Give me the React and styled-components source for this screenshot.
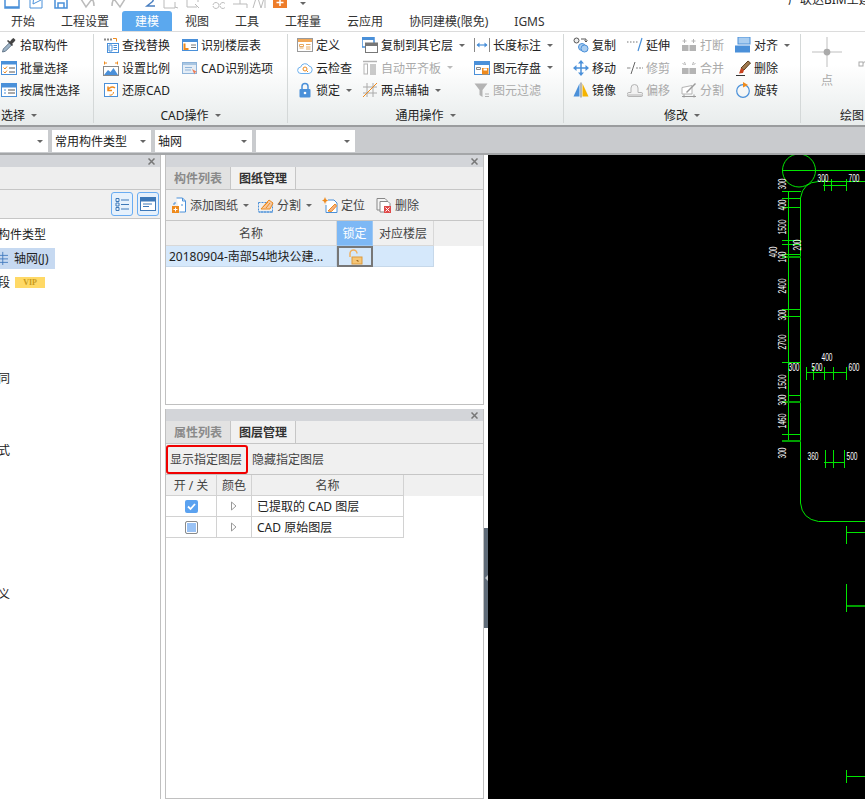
import React from "react";
import styled, { createGlobalStyle } from "styled-components";

const GlobalStyle = createGlobalStyle`
  html, body { margin: 0; padding: 0; background: #fff; }
  body { font-family: "Noto Sans", "Noto Sans CJK SC", sans-serif; font-size: 12px; color: #222; }
`;

const Page = styled.div`
  width: 865px;
  height: 799px;
  overflow: hidden;
  display: flex;
  flex-direction: column;
`;

const QuickBar = styled.div`
  height: 10px;
  flex: none;
  overflow: hidden;
  display: flex;
  align-items: flex-end;
  white-space: nowrap;
  padding-left: 4px;
`;
const QuickIcon = styled.svg`
  width: 16px;
  height: 16px;
  flex: none;
  margin-right: ${(p) => p.$gap}px;
`;
const QuickCaret = styled.span`
  flex: none;
  width: 0;
  height: 0;
  margin: 0 0 5px 12px;
  border-left: 3px solid transparent;
  border-right: 3px solid transparent;
  border-top: 3px solid #666;
`;
const AppTitle = styled.span`
  margin-left: auto;
  margin-bottom: 2px;
  line-height: 16px;
  flex: none;
  width: 77px;
  overflow: hidden;
`;

const TabRow = styled.div`
  height: 21px;
  flex: none;
  display: flex;
  align-items: stretch;
  margin-left: -2px;
`;
const MenuTab = styled.div`
  padding: 0 13px;
  line-height: 21px;
  margin-top: 1px;
  height: 20px;
  white-space: nowrap;
  color: ${(p) => (p.$active ? "#fff" : "#333")};
  background: ${(p) => (p.$active ? "#5ba8ee" : "transparent")};
  border-radius: 3px 3px 0 0;
`;

const Ribbon = styled.div`
  height: 96px;
  flex: none;
  box-sizing: border-box;
  display: flex;
  border-top: 1px solid #dcdcdc;
  border-bottom: 2px solid #9a9c9e;
  background: linear-gradient(#fff 0%, #fff 35%, #e8ecec 100%);
  overflow: hidden;
`;
const RibbonGroup = styled.div`
  width: ${(p) => p.$w}px;
  flex: none;
  box-sizing: border-box;
  padding-left: ${(p) => p.$pad}px;
  padding-top: 2px;
  display: flex;
  flex-direction: column;
`;
const GroupColumns = styled.div`
  display: flex;
  height: 68px;
  flex: none;
`;
const GroupColumn = styled.div`
  width: ${(p) => p.$w}px;
  flex: none;
  display: grid;
  grid-auto-rows: 22.5px;
`;
const RibbonItem = styled.div`
  display: flex;
  align-items: center;
  gap: 3px;
  white-space: nowrap;
  color: ${(p) => (p.$off ? "#aaa" : "#222")};
`;
const GroupLabel = styled.div`
  height: 20px;
  margin-top: 3px;
  margin-left: ${(p) => (p.$left ? 0 : -p.$pad)}px;
  display: flex;
  align-items: center;
  white-space: nowrap;
  justify-content: ${(p) => (p.$left ? "flex-start" : "center")};
  color: #222;
`;
const Caret = styled.span`
  flex: none;
  width: 0;
  height: 0;
  margin-left: ${(p) => p.$gap}px;
  border-left: 3px solid transparent;
  border-right: 3px solid transparent;
  border-top: 3.5px solid ${(p) => (p.$off ? "#bbb" : "#666")};
`;
const RibbonDivider = styled.div`
  width: 1px;
  flex: none;
  margin: 2px 0 2px;
  background: #d4d8d8;
`;
const BigTools = styled.div`
  display: flex;
  height: 68px;
  padding-left: 11px;
  gap: 16px;
  color: #aaa;
`;
const BigTool = styled.div`
  display: flex;
  flex-direction: column;
  align-items: center;
  gap: 4px;
  padding-top: 3px;
`;

const SelectorBar = styled.div`
  height: 28px;
  flex: none;
  box-sizing: border-box;
  background: #c9cbce;
  border-bottom: 2px solid #a4a6a8;
  display: flex;
  gap: 4px;
  padding-top: 3px;
`;
const Combo = styled.div`
  width: ${(p) => p.$w}px;
  height: 22px;
  flex: none;
  box-sizing: border-box;
  background: #fff;
  padding: 0 5px 0 3px;
  display: flex;
  align-items: center;
  justify-content: space-between;
`;

const Main = styled.div`
  flex: 1;
  min-height: 0;
  display: flex;
`;
const LeftPanel = styled.div`
  width: 161px;
  flex: none;
  box-sizing: border-box;
  border-right: 1px solid #c0c0c0;
  display: flex;
  flex-direction: column;
  overflow: hidden;
`;
const MiddleColumn = styled.div`
  width: 319px;
  margin-left: 4px;
  flex: none;
  display: flex;
  flex-direction: column;
  gap: 4px;
`;
const DockPanel = styled.div`
  box-sizing: border-box;
  height: ${(p) => (p.$h ? `${p.$h}px` : "auto")};
  flex: ${(p) => (p.$h ? "none" : "1")};
  border: solid #c0c0c0;
  border-width: 0 1px 1px;
  display: flex;
  flex-direction: column;
  overflow: hidden;
`;
const PanelHeader = styled.div`
  height: 12px;
  flex: none;
  background: #d3d5d9;
  display: flex;
  justify-content: flex-end;
  align-items: center;
  padding-right: 5px;
`;
const TabStrip = styled.div`
  height: 23px;
  flex: none;
  box-sizing: border-box;
  display: flex;
  background: #eeeeee;
  border-bottom: 1px solid #c6c6c6;
`;
const PanelTab = styled.div`
  width: 65px;
  box-sizing: border-box;
  text-align: center;
  line-height: 24px;
  font-weight: 700;
  color: ${(p) => (p.$active ? "#333" : "#8a8a8a")};
  background: ${(p) => (p.$active ? "#f1f1f1" : "#e2e2e2")};
  border-right: 1px solid #c6c6c6;
`;
const Toolbar = styled.div`
  height: ${(p) => p.$h}px;
  flex: none;
  box-sizing: border-box;
  background: #f0f0f0;
  border-bottom: 1px solid #c6c6c6;
  display: flex;
  align-items: center;
  color: #444;
`;
const ToolItem = styled.div`
  display: flex;
  align-items: center;
  gap: 3px;
  margin-left: ${(p) => p.$gap}px;
  white-space: nowrap;
`;
const LayerButton = styled.div`
  box-sizing: border-box;
  width: 82px;
  height: 29px;
  line-height: 25px;
  padding-left: 2px;
  white-space: nowrap;
  color: #444;
  border: 2px solid ${(p) => (p.$marked ? "#f00000" : "transparent")};
  border-radius: 3px;
`;
const ViewButtons = styled.div`
  margin-left: auto;
  display: flex;
  gap: 4px;
  padding-right: 1px;
`;
const ViewButton = styled.div`
  width: 22px;
  height: 24px;
  box-sizing: border-box;
  background: #e6f1fc;
  border: 1px solid #69acf2;
  border-radius: 3px;
  display: flex;
  align-items: center;
  justify-content: center;
`;

const TableRow = styled.div`
  display: flex;
  height: ${(p) => p.$h}px;
  flex: none;
  background: ${(p) => p.$bg || "transparent"};
`;
const Cell = styled.div`
  width: ${(p) => p.$w}px;
  flex: none;
  box-sizing: border-box;
  display: flex;
  align-items: center;
  justify-content: ${(p) => (p.$inset ? "flex-start" : "center")};
  padding-left: ${(p) => p.$inset || 0}px;
  border-right: 1px solid ${(p) => p.$line || "#d2d2d2"};
  border-bottom: 1px solid ${(p) => p.$line || "#d2d2d2"};
  color: ${(p) => p.$color || "#222"};
  background: ${(p) => p.$bg || "transparent"};
  white-space: nowrap;
  overflow: hidden;
`;
const HeaderFill = styled.div`
  flex: 1;
  border-bottom: 1px solid #f0f0f0;
`;
const LockCell = styled(Cell)`
  border: 2px solid #777;
`;
const CheckBox = styled.div`
  width: 13px;
  height: 13px;
  box-sizing: border-box;
  border-radius: 2px;
  display: flex;
  align-items: center;
  justify-content: center;
  background: ${(p) => (p.$on ? "#5ba2f0" : "#99c2f5")};
  border: ${(p) => (p.$on ? "none" : "1px solid #8a8a8a")};
  box-shadow: ${(p) => (p.$on ? "none" : "inset 0 0 0 1px #fff")};
`;

const TreeList = styled.div`
  flex: 1;
  padding-top: 3px;
  background: #fff;
`;
const TreeRow = styled.div`
  height: 24px;
  display: flex;
  align-items: center;
  white-space: nowrap;
  gap: 5px;
  margin-left: ${(p) => p.$shift || 0}px;
`;
const TreeLabel = styled.div`
  height: 21px;
  width: 55px;
  box-sizing: border-box;
  display: flex;
  align-items: center;
  gap: 6px;
  background: #c6d9f1;
`;
const TreeIcon = styled.span`
  display: flex;
  margin-left: -6px;
`;
const VipBadge = styled.span`
  width: 30px;
  height: 11px;
  background: #ffd966;
  color: #c79a1d;
  font: 700 8px/11px "Liberation Serif", serif;
  text-align: center;
`;

const SplitHandle = styled.div`
  width: 4px;
  flex: none;
  padding-top: 373px;
`;
const HandleBar = styled.div`
  width: 4px;
  height: 100px;
  background: #5f6b78;
  display: flex;
  align-items: center;
  justify-content: flex-end;
`;
const HandleArrow = styled.span`
  width: 0;
  height: 0;
  border-top: 3px solid transparent;
  border-bottom: 3px solid transparent;
  border-right: 3px solid #c4c8cc;
`;
const Canvas = styled.svg`
  flex: 1;
  height: 644px;
  min-width: 0;
  display: block;
  background: #000;
`;

const B = "#4a90d9";
const O = "#ee8a1d";
const G = "#b4b4b4";

const ICONS = {
  pick: <><path d="M1.5 15l.8-3 6.6-6.6 2.2 2.2L4.500 14.200z" fill="#9db4c8" stroke="#66788a" /><path d="M9 4.500l2-2.500 1.500-1 2 2-1 1.500L11 7l1 1-1 1-5-5 1-1z" fill="#444" /></>,
  batch: <><rect x=".5" y="1.500" width="15" height="13" fill="#fff" stroke={B} /><rect x="1" y="2" width="14" height="2.500" fill={B} /><path d="M2.500 7.500l1.500 1.500 2-2.500M2.500 11.500l1.500 1.500 2-2.500" fill="none" stroke={O} /><path d="M8 8h6M8 12h6" stroke="#555" /></>,
  attr: <><rect x=".5" y="1.500" width="15" height="13" fill="#fff" stroke={B} /><rect x="1" y="2" width="14" height="3.500" fill={B} /><path d="M3 8h2M3 11h2" stroke={B} /><path d="M7 8h7M7 11h7" stroke="#555" /></>,
  find: <><path d="M1 2.500h8" stroke="#888" strokeWidth="2" strokeDasharray="2 1" /><path d="M10 1.500h3.500v3" fill="none" stroke={O} /><rect x="4.500" y="6.500" width="11" height="9" fill="#fff" stroke={B} /><path d="M6 8h3v6H6zM10.500 8.500h3.500M10.500 10.500h3.500M10.500 12.500h3.500" fill="none" stroke={B} /></>,
  scale: <><path d="M1 3h3M12 3h3M1.500 1.500v3M14.500 1.500v3" stroke={O} /><rect x=".5" y="6.500" width="15" height="9" fill="#fff" stroke="#888" /><path d="M1 15l4-5 2.500 2L10.500 8 15 15z" fill={B} /></>,
  restore: <><rect x="1.500" y="1.500" width="13" height="13" fill="#fff" stroke={B} /><path d="M12 6a4.500 4.500 0 0 0-7 2M5 4.500v4h4" fill="none" stroke={O} strokeWidth="1.500" /><path d="M6.500 13a3 3 0 0 0 4-3" fill="none" stroke={O} /></>,
  floors: <><rect x=".5" y="2.500" width="15" height="11" fill="#fff" stroke={B} /><rect x="1" y="3" width="14" height="2" fill={B} /><path d="M2.500 6.500v5.500h4" fill="none" stroke={O} strokeWidth="2" /><path d="M9 8h5M9 10.500h5" stroke="#777" /></>,
  cadopt: <><rect x=".5" y="2.500" width="14" height="11" fill="#e4edf6" stroke="#8fb4d9" /><rect x="1" y="3" width="13" height="2" fill="#a9c6e2" /><path d="M3 7.500h7M3 10h6" stroke="#8fb4d9" /><path d="M10 9l5 3-2 .5-.5 2z" fill="#ee7d58" /></>,
  define: <><rect x=".5" y="1.500" width="15" height="13" fill="#fff" stroke="#9a9a9a" /><rect x="1" y="2" width="14" height="3" fill={O} opacity=".75" /><path d="M2.500 7.500h4v2h-4zM2.500 11h4M9 7.500h4.500M9 10h4.500M9 12h4.500" fill="none" stroke="#e8a860" /></>,
  cloud: <><path d="M4 13.500a3.200 3.200 0 0 1-.3-6.400A4.500 4.500 0 0 1 12 6a3.800 3.800 0 0 1 0 7.500z" fill="#fff" stroke="#6cb0ee" /><circle cx="8" cy="9" r="2" fill="none" stroke={O} /><path d="M9.500 10.500l1.500 1.500" stroke={O} /></>,
  lock: <><path d="M5 7V4.500a3 3 0 0 1 6 0V7" fill="none" stroke={B} strokeWidth="1.500" /><rect x="2.500" y="7" width="11" height="8.500" rx="1" fill={B} /><circle cx="8" cy="11" r="1.300" fill="#fff" /></>,
  copyTo: <><rect x="0" y="0" width="12" height="10" fill="#fff" stroke={B} strokeWidth="1.500" /><rect x="0" y="0" width="12" height="3" fill={B} /><rect x="3.500" y="6" width="12" height="9.500" fill="#fff" stroke="#777" /><rect x="3.500" y="6" width="12" height="3" fill="#777" /></>,
  alignBoard: <><path d="M1 1.500h14" stroke={G} strokeWidth="1.500" /><rect x="2" y="4" width="3.500" height="10" fill="none" stroke={G} /><rect x="8" y="4" width="6" height="11" fill={G} opacity=".7" /></>,
  twoPoint: <><path d="M5 1v14M11 1v14M1 5h14M1 11h14" stroke="#aaa" /><path d="M1 15L15 1" stroke={O} /></>,
  dim: <><path d="M.5 1v14M15.500 1v14" stroke="#888" /><path d="M3 8h10" stroke={B} strokeWidth="1.200" /><path d="M5.500 5.500L2.500 8l3 2.500zM10.500 5.500L13.500 8l-3 2.500z" fill={B} /></>,
  store: <><rect x=".5" y="1.500" width="15" height="13" fill="#fff" stroke={B} /><rect x="1" y="2" width="14" height="3" fill={B} /><path d="M2.500 7.500h4v2h-4z" fill="none" stroke="#888" /><rect x="8" y="8" width="6.500" height="6.500" fill={O} /><rect x="9.500" y="8.500" width="3.500" height="2" fill="#fff" /></>,
  filter: <><path d="M.5 1.500h13l-5 6.500v7l-3-2V8z" fill={G} /><path d="M11 12h4M11 14.500h4" stroke={G} /></>,
  copy: <><circle cx="3.500" cy="3.500" r="2.500" fill="#eee" stroke="#555" /><path d="M8 2h5v2.500M11.500 3.500L13 5l1.500-1.500" fill="none" stroke="#555" /><circle cx="9" cy="10" r="3.500" fill="#a9cdf0" stroke={B} /><circle cx="11.500" cy="11.500" r="3.500" fill="#a9cdf0" stroke={B} /></>,
  move: <><path d="M8 3v10M3 8h10" stroke={B} strokeWidth="1.500" /><path d="M8 0l3 3.500H5zM8 16l3-3.500H5zM0 8l3.500-3v6zM16 8l-3.500-3v6z" fill={B} /></>,
  mirror: <><path d="M6.500 1.500v13H.5z" fill={B} /><path d="M8 .5v15" stroke="#777" /><path d="M9.500 1.500v13h6z" fill="#f5b400" /></>,
  extend: <><path d="M0 5h1.500M3 5h1.500M6 5h1.500M9 5h1.500" stroke="#777" /><path d="M11 14l4-13" stroke={B} strokeWidth="1.200" /></>,
  trim: <><path d="M0 8h3.500M9 8h2M12 8h2M15 8h1" stroke="#888" /><path d="M4 14L8 2" stroke="#666" /></>,
  breakTool: <><path d="M3.500 2v4M12.500 2v4M1.500 4h4M10.500 4h4" stroke={G} /><rect x="1" y="8" width="6.500" height="6" fill={G} /><rect x="8.500" y="8" width="6.500" height="6" fill={G} /></>,
  merge: <><path d="M3.500 2l1 3M12.500 2l-1 3M1.500 3l2 2M14.500 3l-2 2" stroke={G} /><rect x="1" y="8" width="14" height="6" fill={G} /><path d="M8 8v6" stroke="#eee" /></>,
  offset: <><path d="M2 14.500a2 2 0 0 1 0-4h2V6a3.500 3.500 0 0 1 7 0v4.500h3a2 2 0 0 1 0 4z" fill="#f2f2f2" stroke={G} /><path d="M.5 13h15" stroke={G} /></>,
  splitTool: <><path d="M1 5.500l10-2v8.500H1z" fill="#fff" stroke={G} /><path d="M1 14.500h14M3 12.500v3M13 12.500v3" stroke="#999" /><path d="M5 10L14 1l1 1-9 9z" fill="#999" /></>,
  alignTool: <><rect x="3" y="0" width="12" height="7" fill="#a9cdf0" stroke={B} /><rect x="0" y="8.500" width="15" height="7" fill={B} /></>,
  erase: <><path d="M6 8L13 1l2.500 2L9 10z" fill="#a07a50" stroke="#5c4020" /><path d="M6 8l3 2-1 3-4 .5z" fill="#c8431f" /><path d="M1 15.500h9" stroke="#333" /></>,
  rotate: <><circle cx="8" cy="9" r="6.300" fill="none" stroke={B} strokeWidth="1.200" /><path d="M8 0v5.500L13 3z" fill={O} /></>,
  addDoc: <><path d="M5.500 1h6l3 3v11h-6" fill="#fff" stroke={B} /><path d="M11.500 1v3h3" fill="none" stroke={B} /><path d="M5 6H3v2M11 7v2" fill="none" stroke={B} /><rect x="1" y="9" width="7" height="7" fill={O} /><path d="M4.500 10.500v4M2.500 12.500h4" stroke="#fff" /></>,
  splitDoc: <><rect x=".5" y="5.500" width="14" height="9.500" fill="none" stroke={B} strokeDasharray="2 1" /><path d="M3 12L11 3l4 3-3 6z" fill="#f7c9a0" stroke={O} /><path d="M5 10l5-5M8 11l4-5" stroke={O} /><path d="M1 15h14" stroke={B} /></>,
  locate: <><path d="M3 0l1 2.500 2.500 1-2.500 1L3 7 2 4.500l-2-1 2-1z" fill={O} /><path d="M6 3h6l3 3v9.500H4V8" fill="#fff" stroke={B} /><path d="M6 14l7-7 1.500 2-5 5.500z" fill="#f4b183" stroke={O} /></>,
  delDoc: <><path d="M1 1.500h8l2 2V13H1z" fill="#f4f4f4" stroke="#888" /><path d="M4 4.500h8l2 2V15H4z" fill="#fff" stroke="#888" /><rect x="8" y="9" width="7" height="7" fill="#e04a4a" /><path d="M9.500 10.500l4 4M13.500 10.500l-4 4" stroke="#fff" /></>,
  lockOpen: <><path d="M3 8V4.500a3.500 3.500 0 0 1 7 0" fill="none" stroke="#f0b060" strokeWidth="1.500" /><rect x="5" y="8" width="10" height="7" fill="#f6c677" stroke="#dd9a3c" /><path d="M9.500 11.500h1.500v1.500" stroke="#a06b20" fill="none" /></>,
  listView: <><path d="M2 2.500h3v3H2zM2 7h3v3H2zM2 11.500h3v3H2z" fill="none" stroke="#3d78b8" /><path d="M7 4h8M7 8.500h8M7 13h8" stroke="#3d78b8" /></>,
  cardView: <><rect x=".5" y="1.500" width="15" height="13" fill="#fff" stroke="#3d78b8" /><rect x="1" y="2" width="14" height="3.500" fill="#3d78b8" /><path d="M3 8h9M3 10.500h6" stroke="#3d78b8" /></>,
  axis: <><path d="M3 5h13M3 9h13M3 13h13M10 1v15" stroke="#3f78bd" /></>,
  pointBig: <><path d="M8 0v16M0 8h16" stroke="#bbb" strokeWidth=".5" /><circle cx="8" cy="8" r="1.800" fill="#aaa" /></>,
};

const Icon = ({ name, size = 16 }) => (
  <svg width={size} height={size} viewBox="0 0 16 16" style={{ flex: "none" }}>
    {ICONS[name]}
  </svg>
);

const CloseMark = () => (
  <svg width="7" height="7" viewBox="0 0 7 7"><path d="M.5.5l6 6M6.500.5l-6 6" stroke="#777" strokeWidth="1.500" /></svg>
);

const quickIcons = [
  { gap: 9, d: <path d="M1 0v14h14V0M1 13h14" fill="none" stroke="#4a90d9" strokeWidth="1.500" /> },
  { gap: 9, d: <path d="M1 0v14h12V6M5 0l-1 10 8-4" fill="none" stroke="#4a90d9" /> },
  { gap: 10, d: <path d="M1 0v14h12V0M4 14V9h6v5" fill="none" stroke="#4a90d9" strokeWidth="1.500" /> },
  { gap: 14, d: <path d="M1 5l5 8 6-8c2 2 2 5 2 7" fill="none" stroke="#bbb" strokeWidth="1.500" /> },
  { gap: 17, d: <path d="M15 5l-5 8-6-8c-2 2-2 5-2 7" fill="none" stroke="#bbb" strokeWidth="1.500" /> },
  { gap: 4, d: <path d="M4 5c5-4 8 1 5 3l-5 4h8" fill="none" stroke="#4a7fc0" strokeWidth="1.500" /> },
  { gap: 7, d: <path d="M1 0v14h11V8M12 13l3 1" fill="none" stroke="#bbb" /> },
  { gap: 7, d: <path d="M1 0v13h10M9 10l4 4M12 4v4" fill="none" stroke="#bbb" /> },
  { gap: 7, d: <path d="M4 12a3 3 0 1 0 0-1M11 12a3 3 0 1 0 0-1" fill="none" stroke="#bbb" /> },
  { gap: 4, d: <path d="M1 10h14v4M8 2v8" fill="none" stroke="#bbb" /> },
  { gap: 4, d: <path d="M1 14l4-13 4 13 4-13v13" fill="none" stroke="#bbb" /> },
  { gap: 0, d: <><rect x="1" y="1" width="14" height="13" fill="#ee7d2a" /><path d="M8 5v7M4.500 8.500h7" stroke="#fff" strokeWidth="1.500" /></> },
];

const menuTabs = ["开始", "工程设置", "建模", "视图", "工具", "工程量", "云应用", "协同建模(限免)", "IGMS"];

const ribbonGroups = [
  {
    w: 93, pad: 1, label: "选择", left: true,
    columns: [
      { w: 90, items: [{ icon: "pick", text: "拾取构件" }, { icon: "batch", text: "批量选择" }, { icon: "attr", text: "按属性选择" }] },
    ],
  },
  {
    w: 193, pad: 9, label: "CAD操作",
    columns: [
      { w: 79, items: [{ icon: "find", text: "查找替换" }, { icon: "scale", text: "设置比例" }, { icon: "restore", text: "还原CAD" }] },
      { w: 100, items: [{ icon: "floors", text: "识别楼层表" }, { icon: "cadopt", text: "CAD识别选项" }] },
    ],
  },
  {
    w: 275, pad: 9, label: "通用操作",
    columns: [
      { w: 65, items: [{ icon: "define", text: "定义" }, { icon: "cloud", text: "云检查" }, { icon: "lock", text: "锁定", caret: true }] },
      { w: 112, items: [{ icon: "copyTo", text: "复制到其它层", caret: true }, { icon: "alignBoard", text: "自动平齐板", caret: true, off: true }, { icon: "twoPoint", text: "两点辅轴", caret: true }] },
      { w: 85, items: [{ icon: "dim", text: "长度标注", caret: true }, { icon: "store", text: "图元存盘", caret: true }, { icon: "filter", text: "图元过滤", off: true }] },
    ],
  },
  {
    w: 236, pad: 9, label: "修改",
    columns: [
      { w: 54, items: [{ icon: "copy", text: "复制" }, { icon: "move", text: "移动" }, { icon: "mirror", text: "镜像" }] },
      { w: 54, items: [{ icon: "extend", text: "延伸" }, { icon: "trim", text: "修剪", off: true }, { icon: "offset", text: "偏移", off: true }] },
      { w: 54, items: [{ icon: "breakTool", text: "打断", off: true }, { icon: "merge", text: "合并", off: true }, { icon: "splitTool", text: "分割", off: true }] },
      { w: 60, items: [{ icon: "alignTool", text: "对齐", caret: true }, { icon: "erase", text: "删除" }, { icon: "rotate", text: "旋转" }] },
    ],
  },
];

const treeRows = [
  { text: "构件类型", shift: -2 },
  { text: "轴网(J)", active: true },
  { text: "段", shift: -2, vip: true },
  {}, {}, {},
  { text: "同", shift: -2 },
  {}, {},
  { text: "式", shift: -2 },
  {}, {}, {}, {}, {},
  { text: "义", shift: -2 },
];

// 图纸上的标注，坐标都是页面坐标
const GREEN = "#00e600";
const DARK_GREEN = "#00a000";
const ticksLeft = [191, 198, 207, 240, 244, 254, 309, 316, 362, 434];
const ticksLeftDark = [256.5, 401.5, 440.5];
const ticksShort = [395];
const dimLines = [
  { y: 185, x1: 823, x2: 847, top: 179, bottom: 191, xs: [824.5, 831.5, 846.5] },
  { y: 372.5, x1: 806, x2: 847, top: 367, bottom: 380, xs: [806.5, 813.5, 824.5, 833.5, 846.5] },
  { y: 462.5, x1: 824, x2: 845, top: 450, bottom: 468, xs: [825.5, 833.5, 844.5] },
];
const flatLabels = [
  { x: 823, y: 182, t: "300" }, { x: 854, y: 182, t: "700" },
  { x: 827, y: 361, t: "400" }, { x: 817, y: 371, t: "500" }, { x: 854, y: 371, t: "600" },
  { x: 794, y: 371, t: "300" }, { x: 813, y: 460, t: "360" }, { x: 852, y: 460, t: "500" },
];
const sideLabels = [
  { x: 782, y: 184, t: "300" }, { x: 782, y: 205, t: "400" }, { x: 782, y: 227, t: "1500", w: 15 },
  { x: 797, y: 245, t: "200" }, { x: 773, y: 252, t: "400" }, { x: 782, y: 257, t: "100" },
  { x: 782, y: 286, t: "2400", w: 15 }, { x: 782, y: 315, t: "300" }, { x: 782, y: 342, t: "2700", w: 15 },
  { x: 782, y: 382, t: "1500", w: 15 }, { x: 782, y: 400, t: "300" }, { x: 782, y: 421, t: "1460", w: 15 },
  { x: 782, y: 453, t: "300" },
];

const CadDrawing = () => (
  <Canvas viewBox="488 155 377 644" preserveAspectRatio="xMinYMin slice">
    <g fill="none" stroke={GREEN} strokeWidth="1">
      <circle cx="799" cy="170.500" r="16.500" />
      <path d="M782 170.500H865" />
      <path d="M865 181.500H818.500Q803 182 800.500 198V503Q802 519 818.500 521.500H865" />
      <path d="M788.500 191.500V441" />
      {ticksLeft.map((y) => <path key={y} d={`M782 ${y + 0.5}H800.500`} shapeRendering="crispEdges" />)}
      {ticksShort.map((y) => <path key={y} d={`M788 ${y + 0.5}H800.500`} shapeRendering="crispEdges" />)}
      {dimLines.map((l) => (
        <g key={l.y} shapeRendering="crispEdges">
          <path d={`M${l.x1} ${l.y}H${l.x2}`} />
          {l.xs.map((x) => <path key={x} d={`M${x} ${l.top}V${l.bottom}`} />)}
        </g>
      ))}
      <path d="M846.500 526V544M846.500 532.500H865M846.500 584V612M846.500 770V783M846.500 776.500H865" shapeRendering="crispEdges" />
    </g>
    <g fill="none" stroke={DARK_GREEN} strokeWidth="2" shapeRendering="crispEdges">
      {ticksLeftDark.map((y) => <path key={y} d={`M782 ${y}H800.500`} />)}
      <path d="M847 606H865" />
    </g>
    <g fill="#fff" fontFamily="Liberation Sans, sans-serif" fontSize="11">
      {flatLabels.map((l) => (
        <text key={`${l.x}-${l.y}`} x={l.x} y={l.y} textAnchor="middle" textLength="11" lengthAdjust="spacingAndGlyphs">{l.t}</text>
      ))}
      {sideLabels.map((l) => (
        <text key={`${l.x}-${l.y}`} textAnchor="middle" textLength={l.w || 11} lengthAdjust="spacingAndGlyphs" transform={`translate(${l.x + 4} ${l.y}) rotate(-90)`}>{l.t}</text>
      ))}
    </g>
  </Canvas>
);

const Triangle = () => (
  <svg width="6" height="10" viewBox="0 0 6 10"><path d="M.5 1l4.500 4-4.500 4z" fill="#fff" stroke="#999" /></svg>
);

const App = () => (
  <Page>
    <GlobalStyle />
    <QuickBar>
      {quickIcons.map((q, i) => (
        <QuickIcon key={i} $gap={q.gap} viewBox="0 0 16 16">{q.d}</QuickIcon>
      ))}
      <QuickCaret />
      <AppTitle>广联达BIM土建</AppTitle>
    </QuickBar>

    <TabRow>
      {menuTabs.map((t) => <MenuTab key={t} $active={t === "建模"}>{t}</MenuTab>)}
    </TabRow>

    <Ribbon>
      {ribbonGroups.map((g) => (
        <React.Fragment key={g.label}>
          <RibbonGroup $w={g.w} $pad={g.pad}>
            <GroupColumns>
              {g.columns.map((c, i) => (
                <GroupColumn key={i} $w={c.w}>
                  {c.items.map((it) => (
                    <RibbonItem key={it.text} $off={it.off}>
                      <Icon name={it.icon} />
                      {it.text}
                      {it.caret && <Caret $gap={3} $off={it.off} />}
                    </RibbonItem>
                  ))}
                </GroupColumn>
              ))}
            </GroupColumns>
            <GroupLabel $left={g.left} $pad={g.pad}>{g.label}<Caret $gap={6} /></GroupLabel>
          </RibbonGroup>
          <RibbonDivider />
        </React.Fragment>
      ))}
      <RibbonGroup $w={114} $pad={0}>
        <BigTools>
          <BigTool>
            <Icon name="pointBig" size={30} />
            点
          </BigTool>
          <BigTool>
            <svg width="30" height="30" viewBox="0 0 30 30"><path d="M3 28L24 10" stroke="#aaa" /><rect x="1" y="25" width="4" height="4" fill="#fff" stroke="#aaa" /></svg>
            直
          </BigTool>
        </BigTools>
        <GroupLabel $pad={0}>绘图<Caret $gap={6} /></GroupLabel>
      </RibbonGroup>
    </Ribbon>

    <SelectorBar>
      <Combo $w={48}><span /><Caret /></Combo>
      <Combo $w={99}>常用构件类型<Caret /></Combo>
      <Combo $w={97}>轴网<Caret /></Combo>
      <Combo $w={99}><span /><Caret /></Combo>
    </SelectorBar>

    <Main>
      <LeftPanel>
        <PanelHeader><CloseMark /></PanelHeader>
        <TabStrip />
        <Toolbar $h={29}>
          <ViewButtons>
            <ViewButton><Icon name="listView" /></ViewButton>
            <ViewButton><Icon name="cardView" /></ViewButton>
          </ViewButtons>
        </Toolbar>
        <TreeList>
          {treeRows.map((r, i) => (
            <TreeRow key={i} $shift={r.shift}>
              {r.active ? (
                <TreeLabel><TreeIcon><Icon name="axis" size={14} /></TreeIcon>{r.text}</TreeLabel>
              ) : r.text}
              {r.vip && <VipBadge>VIP</VipBadge>}
            </TreeRow>
          ))}
        </TreeList>
      </LeftPanel>

      <MiddleColumn>
        <DockPanel $h={250}>
          <PanelHeader><CloseMark /></PanelHeader>
          <TabStrip>
            <PanelTab>构件列表</PanelTab>
            <PanelTab $active>图纸管理</PanelTab>
          </TabStrip>
          <Toolbar $h={31}>
            <ToolItem $gap={5}><Icon name="addDoc" />添加图纸<Caret $gap={2} /></ToolItem>
            <ToolItem $gap={9}><Icon name="splitDoc" />分割<Caret $gap={2} /></ToolItem>
            <ToolItem $gap={10}><Icon name="locate" />定位</ToolItem>
            <ToolItem $gap={11}><Icon name="delDoc" />删除</ToolItem>
          </Toolbar>
          <TableRow $h={25} $bg="#f0f0f0">
            <Cell $w={171} $line="#d8d8d8" $color="#444">名称</Cell>
            <Cell $w={36} $bg="#7db8f5" $color="#fff" $line="#9cc8f5">锁定</Cell>
            <Cell $w={61} $line="#d8d8d8" $color="#444">对应楼层</Cell>
            <HeaderFill />
          </TableRow>
          <TableRow $h={21}>
            <Cell $w={171} $inset={3} $bg="#d5e8fb" $line="#c6d8ea">20180904-南部54地块公建...</Cell>
            <LockCell $w={36} $bg="#d5e8fb"><Icon name="lockOpen" /></LockCell>
            <Cell $w={61} $bg="#d5e8fb" $line="#c6d8ea" />
          </TableRow>
        </DockPanel>

        <DockPanel>
          <PanelHeader><CloseMark /></PanelHeader>
          <TabStrip>
            <PanelTab>属性列表</PanelTab>
            <PanelTab $active>图层管理</PanelTab>
          </TabStrip>
          <Toolbar $h={31}>
            <LayerButton $marked>显示指定图层</LayerButton>
            <LayerButton>隐藏指定图层</LayerButton>
          </Toolbar>
          <TableRow $h={21} $bg="#f0f0f0">
            <Cell $w={51} $color="#444">开 / 关</Cell>
            <Cell $w={35} $color="#444">颜色</Cell>
            <Cell $w={152} $color="#444">名称</Cell>
            <HeaderFill />
          </TableRow>
          <TableRow $h={21}>
            <Cell $w={51}>
              <CheckBox $on>
                <svg width="9" height="9" viewBox="0 0 9 9"><path d="M1 4.500l2.500 2.500L8 2" fill="none" stroke="#fff" strokeWidth="1.800" /></svg>
              </CheckBox>
            </Cell>
            <Cell $w={35}><Triangle /></Cell>
            <Cell $w={152} $inset={5}>已提取的 CAD 图层</Cell>
          </TableRow>
          <TableRow $h={21}>
            <Cell $w={51}><CheckBox /></Cell>
            <Cell $w={35}><Triangle /></Cell>
            <Cell $w={152} $inset={5}>CAD 原始图层</Cell>
          </TableRow>
        </DockPanel>
      </MiddleColumn>

      <SplitHandle>
        <HandleBar><HandleArrow /></HandleBar>
      </SplitHandle>

      <CadDrawing />
    </Main>
  </Page>
);

export default App;
